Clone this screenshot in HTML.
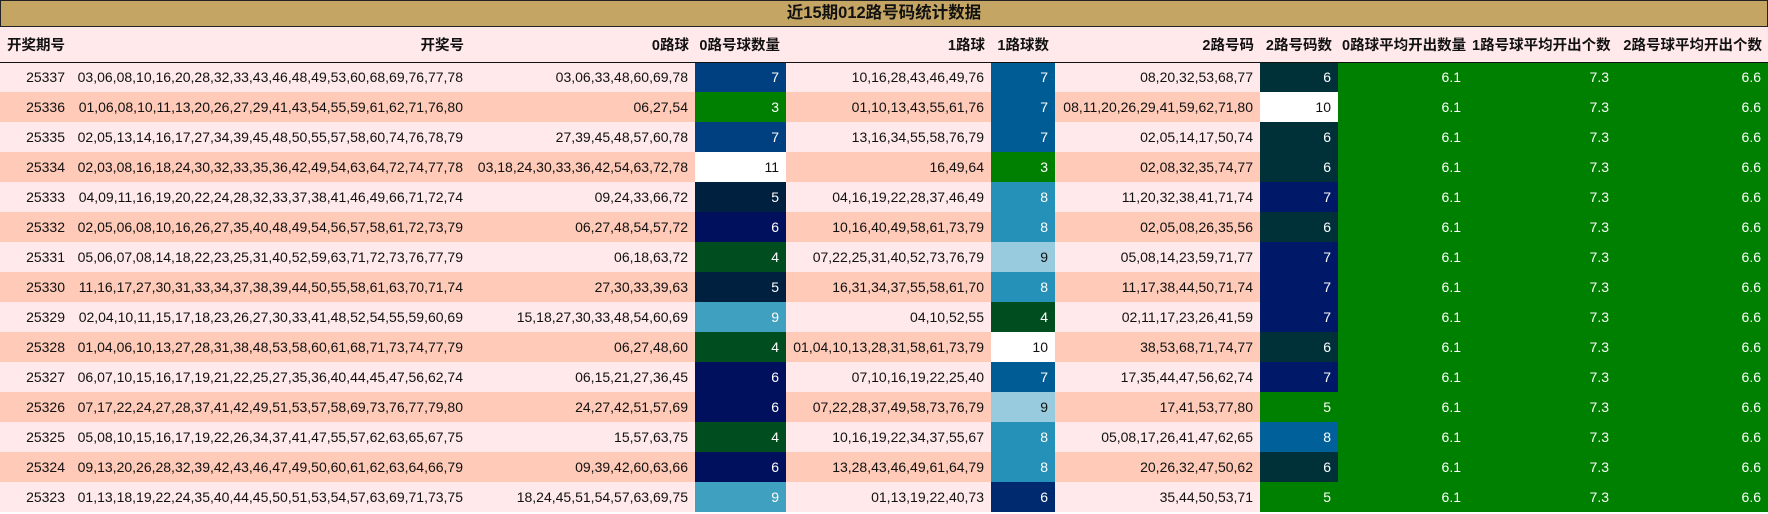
<!DOCTYPE html>
<html><head><meta charset="utf-8"><style>
*{margin:0;padding:0;box-sizing:border-box}
body{width:1768px;height:514px;background:#fff;font-family:"Liberation Sans","Noto Sans CJK SC",sans-serif;font-size:14px;color:#111;overflow:hidden}
.title{height:27px;background:#c4a564;border:1px solid #222;text-align:center;font-weight:bold;font-size:16.5px;line-height:25px;color:#111}
table{border-collapse:collapse;table-layout:fixed;width:1768px}
td,th{padding:0 7px 0 4px;text-align:right;white-space:nowrap;overflow:hidden}
th{height:35px;background:#ffe9ea;font-weight:bold;font-size:14.5px;border-bottom:1px solid #111;padding-right:6px}
th.l{text-align:left;padding-left:7px}
td{height:30px}
tr.a td{background:#ffe9ea}
tr.b td{background:#ffcab8}
td.w{color:#fff}
tr td.g{background:#008000;color:#fff}
</style></head><body>
<div class="title">近15期012路号码统计数据</div>
<table>
<colgroup><col style="width:72px"><col style="width:398px"><col style="width:225px"><col style="width:91px"><col style="width:205px"><col style="width:64px"><col style="width:205px"><col style="width:78px"><col style="width:130px"><col style="width:148px"><col style="width:152px"></colgroup>
<tr><th class="l">开奖期号</th><th>开奖号</th><th>0路球</th><th>0路号球数量</th><th>1路球</th><th>1路球数</th><th>2路号码</th><th>2路号码数</th><th>0路球平均开出数量</th><th>1路号球平均开出个数</th><th>2路号球平均开出个数</th></tr>
<tr class="a"><td>25337</td><td>03,06,08,10,16,20,28,32,33,43,46,48,49,53,60,68,69,76,77,78</td><td>03,06,33,48,60,69,78</td><td class="w" style="background:#004080">7</td><td>10,16,28,43,46,49,76</td><td class="w" style="background:#005c94">7</td><td>08,20,32,53,68,77</td><td class="w" style="background:#003038">6</td><td class="g">6.1</td><td class="g">7.3</td><td class="g">6.6</td></tr>
<tr class="b"><td>25336</td><td>01,06,08,10,11,13,20,26,27,29,41,43,54,55,59,61,62,71,76,80</td><td>06,27,54</td><td class="w" style="background:#008000">3</td><td>01,10,13,43,55,61,76</td><td class="w" style="background:#005c94">7</td><td>08,11,20,26,29,41,59,62,71,80</td><td style="background:#fff">10</td><td class="g">6.1</td><td class="g">7.3</td><td class="g">6.6</td></tr>
<tr class="a"><td>25335</td><td>02,05,13,14,16,17,27,34,39,45,48,50,55,57,58,60,74,76,78,79</td><td>27,39,45,48,57,60,78</td><td class="w" style="background:#004080">7</td><td>13,16,34,55,58,76,79</td><td class="w" style="background:#005c94">7</td><td>02,05,14,17,50,74</td><td class="w" style="background:#003038">6</td><td class="g">6.1</td><td class="g">7.3</td><td class="g">6.6</td></tr>
<tr class="b"><td>25334</td><td>02,03,08,16,18,24,30,32,33,35,36,42,49,54,63,64,72,74,77,78</td><td>03,18,24,30,33,36,42,54,63,72,78</td><td style="background:#fff">11</td><td>16,49,64</td><td class="w" style="background:#008000">3</td><td>02,08,32,35,74,77</td><td class="w" style="background:#003038">6</td><td class="g">6.1</td><td class="g">7.3</td><td class="g">6.6</td></tr>
<tr class="a"><td>25333</td><td>04,09,11,16,19,20,22,24,28,32,33,37,38,41,46,49,66,71,72,74</td><td>09,24,33,66,72</td><td class="w" style="background:#002040">5</td><td>04,16,19,22,28,37,46,49</td><td class="w" style="background:#2590b8">8</td><td>11,20,32,38,41,71,74</td><td class="w" style="background:#001868">7</td><td class="g">6.1</td><td class="g">7.3</td><td class="g">6.6</td></tr>
<tr class="b"><td>25332</td><td>02,05,06,08,10,16,26,27,35,40,48,49,54,56,57,58,61,72,73,79</td><td>06,27,48,54,57,72</td><td class="w" style="background:#00105c">6</td><td>10,16,40,49,58,61,73,79</td><td class="w" style="background:#2590b8">8</td><td>02,05,08,26,35,56</td><td class="w" style="background:#003038">6</td><td class="g">6.1</td><td class="g">7.3</td><td class="g">6.6</td></tr>
<tr class="a"><td>25331</td><td>05,06,07,08,14,18,22,23,25,31,40,52,59,63,71,72,73,76,77,79</td><td>06,18,63,72</td><td class="w" style="background:#004d20">4</td><td>07,22,25,31,40,52,73,76,79</td><td style="background:#98cbdd">9</td><td>05,08,14,23,59,71,77</td><td class="w" style="background:#001868">7</td><td class="g">6.1</td><td class="g">7.3</td><td class="g">6.6</td></tr>
<tr class="b"><td>25330</td><td>11,16,17,27,30,31,33,34,37,38,39,44,50,55,58,61,63,70,71,74</td><td>27,30,33,39,63</td><td class="w" style="background:#002040">5</td><td>16,31,34,37,55,58,61,70</td><td class="w" style="background:#2590b8">8</td><td>11,17,38,44,50,71,74</td><td class="w" style="background:#001868">7</td><td class="g">6.1</td><td class="g">7.3</td><td class="g">6.6</td></tr>
<tr class="a"><td>25329</td><td>02,04,10,11,15,17,18,23,26,27,30,33,41,48,52,54,55,59,60,69</td><td>15,18,27,30,33,48,54,60,69</td><td class="w" style="background:#40a0c0">9</td><td>04,10,52,55</td><td class="w" style="background:#004d20">4</td><td>02,11,17,23,26,41,59</td><td class="w" style="background:#001868">7</td><td class="g">6.1</td><td class="g">7.3</td><td class="g">6.6</td></tr>
<tr class="b"><td>25328</td><td>01,04,06,10,13,27,28,31,38,48,53,58,60,61,68,71,73,74,77,79</td><td>06,27,48,60</td><td class="w" style="background:#004d20">4</td><td>01,04,10,13,28,31,58,61,73,79</td><td style="background:#fff">10</td><td>38,53,68,71,74,77</td><td class="w" style="background:#003038">6</td><td class="g">6.1</td><td class="g">7.3</td><td class="g">6.6</td></tr>
<tr class="a"><td>25327</td><td>06,07,10,15,16,17,19,21,22,25,27,35,36,40,44,45,47,56,62,74</td><td>06,15,21,27,36,45</td><td class="w" style="background:#00105c">6</td><td>07,10,16,19,22,25,40</td><td class="w" style="background:#005c94">7</td><td>17,35,44,47,56,62,74</td><td class="w" style="background:#001868">7</td><td class="g">6.1</td><td class="g">7.3</td><td class="g">6.6</td></tr>
<tr class="b"><td>25326</td><td>07,17,22,24,27,28,37,41,42,49,51,53,57,58,69,73,76,77,79,80</td><td>24,27,42,51,57,69</td><td class="w" style="background:#00105c">6</td><td>07,22,28,37,49,58,73,76,79</td><td style="background:#98cbdd">9</td><td>17,41,53,77,80</td><td class="w" style="background:#008000">5</td><td class="g">6.1</td><td class="g">7.3</td><td class="g">6.6</td></tr>
<tr class="a"><td>25325</td><td>05,08,10,15,16,17,19,22,26,34,37,41,47,55,57,62,63,65,67,75</td><td>15,57,63,75</td><td class="w" style="background:#004d20">4</td><td>10,16,19,22,34,37,55,67</td><td class="w" style="background:#2590b8">8</td><td>05,08,17,26,41,47,62,65</td><td class="w" style="background:#00609a">8</td><td class="g">6.1</td><td class="g">7.3</td><td class="g">6.6</td></tr>
<tr class="b"><td>25324</td><td>09,13,20,26,28,32,39,42,43,46,47,49,50,60,61,62,63,64,66,79</td><td>09,39,42,60,63,66</td><td class="w" style="background:#00105c">6</td><td>13,28,43,46,49,61,64,79</td><td class="w" style="background:#2590b8">8</td><td>20,26,32,47,50,62</td><td class="w" style="background:#003038">6</td><td class="g">6.1</td><td class="g">7.3</td><td class="g">6.6</td></tr>
<tr class="a"><td>25323</td><td>01,13,18,19,22,24,35,40,44,45,50,51,53,54,57,63,69,71,73,75</td><td>18,24,45,51,54,57,63,69,75</td><td class="w" style="background:#40a0c0">9</td><td>01,13,19,22,40,73</td><td class="w" style="background:#002a70">6</td><td>35,44,50,53,71</td><td class="w" style="background:#008000">5</td><td class="g">6.1</td><td class="g">7.3</td><td class="g">6.6</td></tr>
</table>
</body></html>
